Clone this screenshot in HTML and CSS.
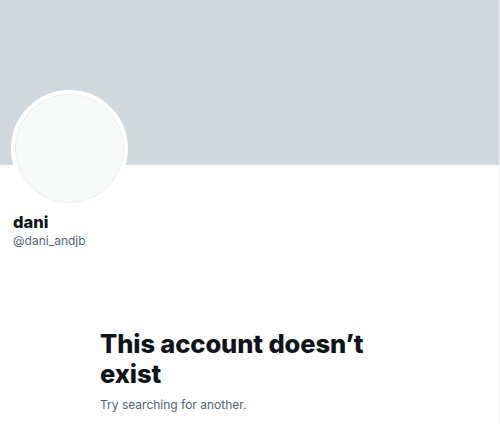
FILE: index.html
```html
<!DOCTYPE html>
<html lang="en">
<head>
    <meta charset="UTF-8">
    <meta name="viewport" content="width=device-width, initial-scale=1.0">
    <title>dani (@dani_andjb)</title>
    <link rel="stylesheet" href="styles.css">
</head>
<body>
    <!-- Profile column -->
    <main class="profile">
        <!-- Header image (empty) -->
        <div class="banner"></div>

        <!-- Avatar, name and handle -->
        <div class="info">
            <div class="avatar"></div>
            <div class="name">dani</div>
            <div class="handle">@dani_andjb</div>
        </div>

        <!-- Empty state message -->
        <div class="empty">
            <h1>This account doesn’t exist</h1>
            <p>Try searching for another.</p>
        </div>
    </main>
</body>
</html>
```

FILE: styles.css
```css
/* Page layout */
body {
    margin: 0;
    background-color: #ffffff;
    font-family: Inter, "Liberation Sans", Arial, sans-serif;
    color: #0f1419;
}

.profile {
    border-right: 1px solid #eff3f4;
    min-height: 424px;
    box-sizing: border-box;
}

/* Grey header block */
.banner {
    height: 165px;
    background-color: #cfd9de;
}

/* Avatar overlaps the banner */
.info {
    padding: 0 13px;
}

.avatar {
    width: 109px;
    height: 109px;
    margin: -75px 0 0 -2px;
    border: 4px solid #ffffff;
    border-radius: 50%;
    background-color: #f7f9f9;
    box-shadow: inset 0 0 0 1px #eaeeef;
}

.name {
    margin-top: 5px;
    font-size: 16.5px;
    font-weight: 800;
    line-height: 20px;
}

.handle {
    font-size: 12px;
    line-height: 17px;
    color: #536471;
}

/* "Account doesn't exist" message */
.empty {
    padding: 80px 0 0 100px;
    width: 290px;
}

.empty h1 {
    margin: 0;
    font-size: 25.5px;
    font-weight: 800;
    line-height: 30px;
    letter-spacing: -0.1px;
}

.empty p {
    margin: 8px 0 0;
    font-size: 12px;
    line-height: 16px;
    color: #536471;
}
```
